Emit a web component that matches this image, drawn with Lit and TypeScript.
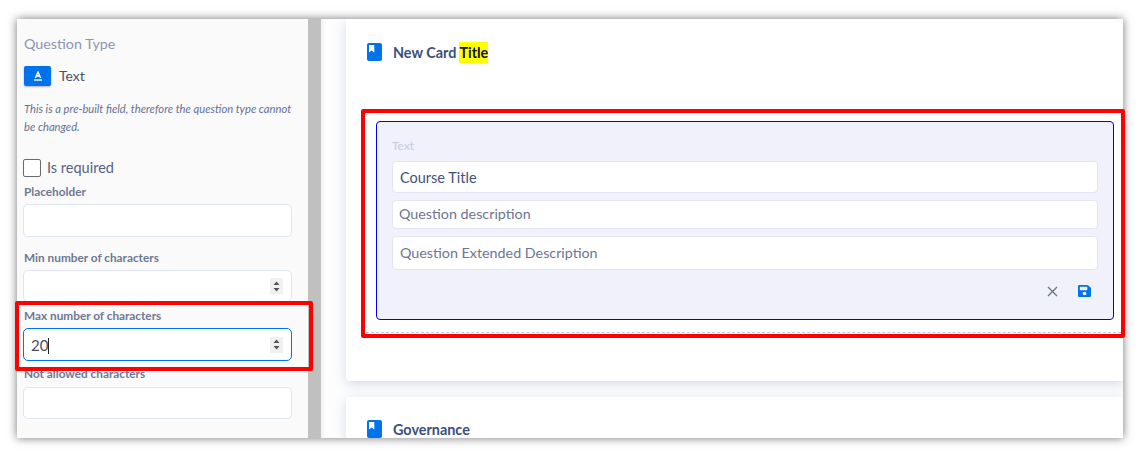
import { LitElement, html, css } from 'lit';
import { customElement } from 'lit/decorators.js';

const spinner = html`
  <span class="spinner">
    <svg width="7" height="13" viewBox="0 0 7 13">
      <path d="M3.5 1.5 6.5 5H.5z M.5 8h6l-3 3.5z" fill="#555"></path>
    </svg>
  </span>
`;

const bookIcon = html`
  <svg class="book" width="15" height="18" viewBox="0 0 15 18">
    <rect width="15" height="18" rx="2" fill="#0073ea"></rect>
    <path d="M2 2h5.3v7.4L4.65 7.6 2 9.4z" fill="#fff"></path>
  </svg>
`;

@customElement('app-root')
export class AppRoot extends LitElement {
  static styles = css`
    :host {
      display: block;
      position: relative;
      width: 1141px;
      height: 461px;
      padding: 19px 18px 23px 17px;
      box-sizing: border-box;
      background: #fff;
      font-family: Lato, 'Noto Sans', sans-serif;
      overflow: hidden;
    }

    .window {
      display: flex;
      height: 419px;
      overflow: hidden;
      box-shadow: 0 0 9px rgba(0, 0, 0, 0.55);
    }

    .side {
      width: 291px;
      flex: none;
      box-sizing: border-box;
      padding: 16px 16px 0 6px;
      background: #fafafa;
    }

    .side-title {
      padding-left: 1px;
      font-size: 14.3px;
      line-height: 17px;
      color: #8b96b3;
    }

    .type-row {
      display: flex;
      align-items: center;
      gap: 8px;
      margin-top: 14px;
      font-size: 14px;
      line-height: 20px;
      color: #4a5268;
    }

    .type-btn {
      display: flex;
      align-items: center;
      justify-content: center;
      width: 27px;
      height: 20px;
      margin-left: 1px;
      border-radius: 2px;
      background: #0073ea;
      box-shadow: 0 1px 2px rgba(0, 0, 0, 0.3);
    }

    .hint {
      margin: 14px 0 0;
      padding-left: 1px;
      font-size: 11.2px;
      line-height: 18px;
      font-style: italic;
      color: #667194;
    }

    .required {
      display: flex;
      align-items: center;
      gap: 6px;
      margin-top: 23px;
      font-size: 14.5px;
      line-height: 18px;
      color: #56627f;
    }

    .box {
      width: 16px;
      height: 16px;
      border: 1px solid #6b6b6b;
      border-radius: 2px;
      background: #fff;
    }

    .label {
      margin-top: 7px;
      padding-left: 1px;
      font-size: 11.8px;
      line-height: 15px;
      font-weight: 700;
      color: #6d7893;
      height: 15px;
    }

    .field {
      display: flex;
      align-items: center;
      justify-content: space-between;
      box-sizing: border-box;
      height: 33px;
      margin-top: 5px;
      padding: 0 8px 0 7px;
      border: 1px solid #dfe6f2;
      border-radius: 5px;
      background: #fff;
      font-size: 15px;
      color: #4a4f5c;
    }

    .field.focused {
      border-color: #0073ea;
    }

    .short { height: 32px; }
    .gap-a { margin-top: 13px; }
    .gap-b { margin-top: 6px; }
    .gap-c { margin-top: 5px; }
    .gap-d { margin-top: 6px; }

    .caret {
      display: inline-block;
      width: 1px;
      height: 16px;
      background: #222;
      vertical-align: -3px;
    }

    .spinner {
      display: flex;
      align-items: center;
      justify-content: center;
      width: 13px;
      height: 16px;
      background: #f0f0f0;
    }

    .scroll {
      width: 13px;
      flex: none;
      background: #c0c0c0;
    }

    .main {
      flex: 1;
      min-width: 0;
      padding-left: 25px;
      background: linear-gradient(90deg, #f5f5f5 0 3px, #fdfdfe 3px);
    }

    .card {
      background: #fff;
      box-shadow: 0 3px 12px rgba(70, 100, 140, 0.22);
    }

    .first {
      height: 362px;
      padding-top: 24px;
      box-sizing: border-box;
      border-radius: 0 0 0 4px;
    }

    .second {
      margin-top: 16px;
      padding-top: 23px;
      border-radius: 4px 0 0 0;
    }

    .card-head {
      display: flex;
      align-items: center;
      gap: 11px;
      height: 18px;
      padding-left: 21px;
      font-size: 14.4px;
      font-weight: 700;
      color: #3b4f7a;
    }

    .book { flex: none; }

    mark {
      background: #ffff00;
      color: #111;
      padding: 2px 0;
    }

    .editor {
      box-sizing: border-box;
      height: 199px;
      margin: 60px 9px 0 30px;
      padding: 16px 15px 0;
      border: 1px solid #0000e0;
      border-radius: 4px;
      background: #f0f1fb;
    }

    .editor-label {
      font-size: 12px;
      line-height: 16px;
      color: #c6cbdb;
    }

    .line {
      display: flex;
      align-items: center;
      box-sizing: border-box;
      padding: 0 7px;
      border: 1px solid #e2e6f2;
      border-radius: 4px;
      background: #fff;
      font-size: 14.3px;
    }

    .title-line {
      height: 32px;
      margin-top: 7px;
      font-size: 14.5px;
      color: #3f5379;
    }

    .desc-line {
      height: 29px;
      margin-top: 7px;
      padding: 0 6px 2px;
      color: #6c7691;
    }

    .ext-line {
      height: 34px;
      margin-top: 7px;
      padding-bottom: 2px;
      color: #6c7691;
    }

    .actions {
      display: flex;
      justify-content: flex-end;
      align-items: center;
      gap: 20px;
      margin-top: 14px;
      padding-right: 7px;
      height: 14px;
    }

    .dash {
      margin: 12px 2px 0 20px;
      border-top: 1px dashed #c4c8d8;
    }

    .mark-box {
      position: absolute;
      box-sizing: border-box;
      border: 4px solid #ff0000;
      border-radius: 2px;
    }

    .mark-side {
      left: 15px;
      top: 301px;
      width: 298px;
      height: 70px;
    }

    .mark-main {
      left: 361px;
      top: 109px;
      width: 764px;
      height: 229px;
    }
  `;

  render() {
    return html`
      <div class="window">
        <aside class="side">
          <div class="side-title">Question Type</div>
          <div class="type-row">
            <span class="type-btn">
              <svg width="10" height="10" viewBox="0 0 10 10">
                <path d="M2.4 7 5 1l2.6 6M3.4 5h3.2" fill="none" stroke="#fff" stroke-width="1.4"></path>
                <path d="M1 9h8" stroke="#fff" stroke-width="1.4"></path>
              </svg>
            </span>
            Text
          </div>
          <p class="hint">This is a pre-built field, therefore the question type cannot be changed.</p>
          <div class="required"><span class="box"></span>Is required</div>
          <div class="label">Placeholder</div>
          <div class="field"></div>
          <div class="label gap-a">Min number of characters</div>
          <div class="field short"><span></span>${spinner}</div>
          <div class="label gap-b">Max number of characters</div>
          <div class="field focused"><span>20<span class="caret"></span></span>${spinner}</div>
          <div class="label gap-c">Not allowed characters</div>
          <div class="field short gap-d"></div>
        </aside>
        <div class="scroll"></div>
        <main class="main">
          <section class="card first">
            <div class="card-head">${bookIcon}<span>New Card <mark>Title</mark></span></div>
            <div class="editor">
              <div class="editor-label">Text</div>
              <div class="line title-line">Course Title</div>
              <div class="line desc-line">Question description</div>
              <div class="line ext-line">Question Extended Description</div>
              <div class="actions">
                <svg width="11" height="11" viewBox="0 0 11 11">
                  <path d="M1 1l9 9M10 1l-9 9" stroke="#6b7280" stroke-width="1.3" fill="none"></path>
                </svg>
                <svg width="13" height="12" viewBox="0 32 448 448" preserveAspectRatio="none">
                  <path fill="#0073ea" d="M433.941 129.941l-83.882-83.882A48 48 0 0 0 316.118 32H48C21.49 32 0 53.49 0 80v352c0 26.51 21.49 48 48 48h352c26.51 0 48-21.49 48-48V163.882a48 48 0 0 0-14.059-33.941zM224 416c-35.346 0-64-28.654-64-64 0-35.346 28.654-64 64-64s64 28.654 64 64c0 35.346-28.654 64-64 64zm96-304.52V212c0 6.627-5.373 12-12 12H76c-6.627 0-12-5.373-12-12V108c0-6.627 5.373-12 12-12h228.52c3.183 0 6.235 1.264 8.485 3.515l3.48 3.48A11.996 11.996 0 0 1 320 111.48z"></path>
                </svg>
              </div>
            </div>
            <div class="dash"></div>
          </section>
          <section class="card second">
            <div class="card-head">${bookIcon}<span>Governance</span></div>
          </section>
        </main>
      </div>
      <div class="mark-box mark-side"></div>
      <div class="mark-box mark-main"></div>
    `;
  }
}
